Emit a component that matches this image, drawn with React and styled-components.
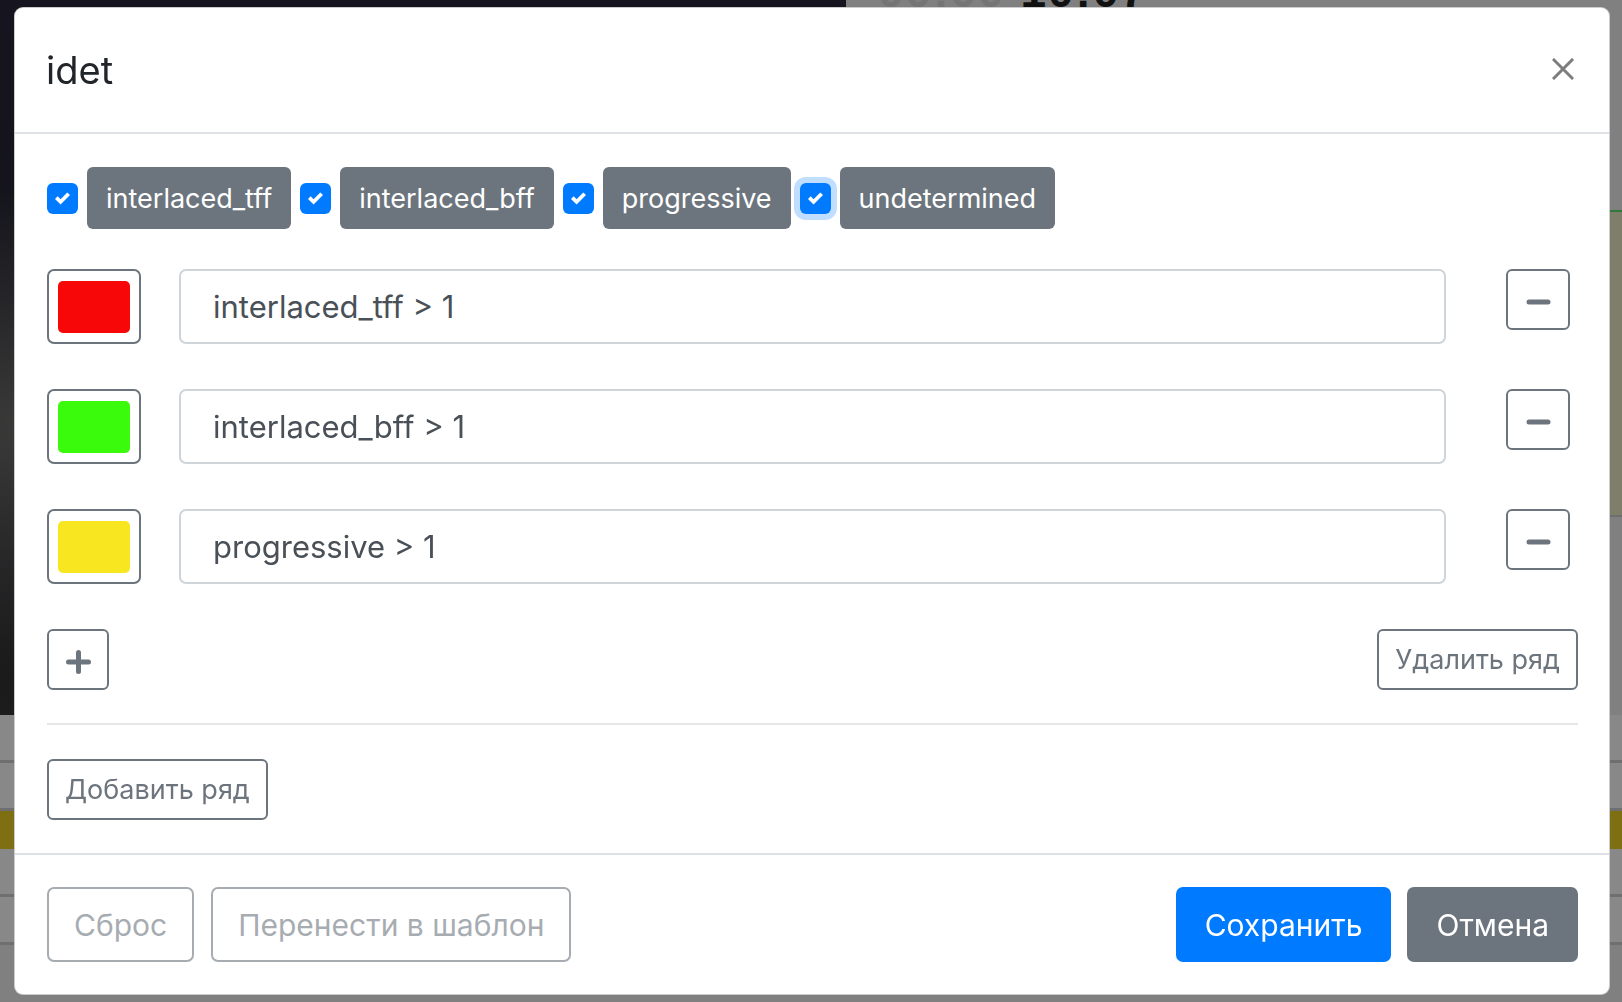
import React from 'react'
import styled, { createGlobalStyle } from 'styled-components'

const FILTERS = ['interlaced_tff', 'interlaced_bff', 'progressive', 'undetermined']

const RULES = [
  { color: '#f70707', expr: 'interlaced_tff > 1' },
  { color: '#3afb0b', expr: 'interlaced_bff > 1' },
  { color: '#f8e621', expr: 'progressive > 1' },
]

const CheckIcon = () => (
  <svg width="15" height="15" viewBox="0 0 8 8">
    <path fill="#fff" d="M6.564.75l-3.59 3.612-1.538-1.55L0 4.26l2.974 2.99L8 2.193z" />
  </svg>
)

const MinusIcon = () => (
  <svg width="25" height="6" viewBox="0 0 25 6">
    <rect x="0.5" y="0.5" width="24" height="5" rx="2.5" fill="#6c757d" />
  </svg>
)

const PlusIcon = () => (
  <svg width="25" height="24" viewBox="0 0 25 24">
    <rect x="0" y="9.5" width="25" height="5" rx="2.5" fill="#6c757d" />
    <rect x="10" y="0" width="5" height="24" rx="2.5" fill="#6c757d" />
  </svg>
)

const CloseIcon = () => (
  <svg width="22" height="22" viewBox="0 0 22 22">
    <path d="M2 2L20 20M20 2L2 20" stroke="#7d7d7d" strokeWidth="3" strokeLinecap="square" />
  </svg>
)

const App = () => {
  return (
    <>
      <GlobalStyle />

      <Page>
        <Stage>
          <Video />
          <Side>
            <Clock>
              <Faded>00:00</Faded> 10:07
            </Clock>
            <SideGap />
            <SideHeading>s</SideHeading>
            <SideRule />
            <SidePanel />
          </Side>
        </Stage>
        <Track />
        <Track />
        <Timeline />
        <Track />
        <Track />
      </Page>

      <Overlay>
        <Dialog>
          <Header>
            <Title>idet</Title>
            <Close type="button" aria-label="Close"><CloseIcon /></Close>
          </Header>

          <Body>
            <Filters>
              {FILTERS.map((name, i) => (
                <Filter key={name}>
                  <Check $focused={i === FILTERS.length - 1}><CheckIcon /></Check>
                  <Badge>{name}</Badge>
                </Filter>
              ))}
            </Filters>

            <Rules>
              {RULES.map(rule => (
                <Rule key={rule.expr}>
                  <SwatchButton type="button">
                    <Swatch $color={rule.color} />
                  </SwatchButton>
                  <Expr value={rule.expr} readOnly />
                  <IconButton type="button" $w={64}><MinusIcon /></IconButton>
                </Rule>
              ))}
            </Rules>

            <Actions>
              <IconButton type="button" $w={62}><PlusIcon /></IconButton>
              <SmallButton type="button">Удалить ряд</SmallButton>
            </Actions>

            <Divider />

            <SmallButton type="button" $start>Добавить ряд</SmallButton>
          </Body>

          <Footer>
            <ButtonGroup $gap={17}>
              <Button $variant="outline" disabled>Сброс</Button>
              <Button $variant="outline" disabled>Перенести в шаблон</Button>
            </ButtonGroup>
            <ButtonGroup $gap={16}>
              <Button $variant="primary" $pad={27}>Сохранить</Button>
              <Button $variant="secondary" $pad={27}>Отмена</Button>
            </ButtonGroup>
          </Footer>
        </Dialog>
      </Overlay>
    </>
  )
}

export default App

const GlobalStyle = createGlobalStyle`
  html, body {
    margin: 0;
    padding: 0;
  }
  body {
    width: 1622px;
    height: 1002px;
    overflow: hidden;
    background: #808080;
    font-family: Inter, "Noto Sans", "Liberation Sans", sans-serif;
  }
  * {
    box-sizing: border-box;
  }
`

/* page behind the backdrop, already dimmed */

const Page = styled.div`
  height: 100vh;
  display: flex;
  flex-direction: column;
  background: #808080;
`

const Stage = styled.div`
  display: flex;
  height: 715px;
`

const Video = styled.div`
  width: 846px;
  background:
    radial-gradient(ellipse at 5% 60%, #3b3b3a 0%, transparent 40%),
    linear-gradient(180deg, #16151f 0%, #121218 60%, #1c1c1c 100%);
`

const Side = styled.div`
  flex: 1;
  display: flex;
  flex-direction: column;
  overflow: hidden;
`

const Clock = styled.div`
  margin-top: -36px;
  padding-left: 32px;
  height: 44px;
  font: 700 46px "Liberation Sans", sans-serif;
  color: #111;
  letter-spacing: 2px;
`

const Faded = styled.span`
  color: #757575;
`

const SideGap = styled.div`
  height: 150px;
`

const SideHeading = styled.div`
  height: 52px;
  padding-left: 742px;
  font: 700 28px "Liberation Sans", sans-serif;
  color: #0e4d1c;
`

const SideRule = styled.div`
  height: 2px;
  background: #2f7a3a;
`

const SidePanel = styled.div`
  height: 305px;
  background: #7f7e6a;
  border-bottom: 2px solid #6e6e6e;
`

const Track = styled.div`
  height: 48px;
  border-bottom: 3px solid #6f6f6f;
  background: #888;
`

const Timeline = styled.div`
  height: 38px;
  background: #7e7012;
`

/* modal */

const Overlay = styled.div`
  position: fixed;
  inset: 0;
  padding: 7px 12px 0 14px;
`

const Dialog = styled.div`
  width: 1596px;
  display: flex;
  flex-direction: column;
  background: #fff;
  border: 1px solid rgba(0, 0, 0, 0.2);
  border-radius: 9px;
  color: #212529;
`

const Header = styled.header`
  height: 126px;
  display: flex;
  align-items: center;
  justify-content: space-between;
  padding: 0 35px 0 31px;
  border-bottom: 2px solid #dee2e6;
`

const Title = styled.h5`
  margin: 0;
  font-size: 38px;
  font-weight: 400;
  line-height: 1;
  color: #212529;
`

const Close = styled.button`
  display: flex;
  padding: 0;
  border: 0;
  background: none;
  margin-top: -2px;
`

const Body = styled.div`
  display: flex;
  flex-direction: column;
  padding: 33px 31px 33px 32px;
`

const Filters = styled.div`
  display: flex;
  align-items: center;
  gap: 9px;
`

const Filter = styled.label`
  display: flex;
  align-items: center;
  gap: 9px;
`

const Check = styled.span`
  width: 31px;
  height: 31px;
  display: flex;
  align-items: center;
  justify-content: center;
  border-radius: 6px;
  background: #007bff;
  box-shadow: ${p => (p.$focused ? '0 0 0 6px #c0deff' : 'none')};
`

const Badge = styled.span`
  height: 62px;
  display: flex;
  align-items: center;
  padding: 0 19px;
  border-radius: 6px;
  background: #6c757d;
  color: #fff;
  font-size: 27px;
`

const Rules = styled.div`
  display: flex;
  flex-direction: column;
  gap: 45px;
  margin-top: 40px;
`

const Rule = styled.div`
  display: flex;
  align-items: flex-start;
  padding-right: 8px;
`

const SwatchButton = styled.button`
  width: 94px;
  height: 75px;
  padding: 0;
  display: flex;
  align-items: center;
  justify-content: center;
  border: 2px solid #6c757d;
  border-radius: 7px;
  background: #fff;
`

const Swatch = styled.span`
  width: 72px;
  height: 52px;
  border-radius: 5px;
  background: ${p => p.$color};
`

const Expr = styled.input`
  flex: 1;
  min-width: 0;
  height: 75px;
  margin: 0 60px 0 38px;
  padding: 0 32px;
  border: 2px solid #ced4da;
  border-radius: 7px;
  font-family: inherit;
  font-size: 31px;
  color: #495057;
  outline: none;
`

const IconButton = styled.button`
  width: ${p => p.$w}px;
  height: 61px;
  padding: 4px 0 0;
  display: flex;
  align-items: center;
  justify-content: center;
  border: 2px solid #6c757d;
  border-radius: 6px;
  background: #fff;
`

const Actions = styled.div`
  display: flex;
  align-items: center;
  justify-content: space-between;
  margin-top: 45px;
`

const SmallButton = styled.button`
  align-self: ${p => (p.$start ? 'flex-start' : 'auto')};
  height: 61px;
  padding: 0 16px;
  border: 2px solid #6c757d;
  border-radius: 6px;
  background: #fff;
  color: #6c757d;
  font-family: inherit;
  font-size: 27px;
`

const Divider = styled.hr`
  width: 100%;
  margin: 33px 0 34px;
  border: 0;
  border-top: 2px solid #e6e6e6;
`

const Footer = styled.footer`
  display: flex;
  align-items: center;
  justify-content: space-between;
  padding: 32px 31px 32px 32px;
  border-top: 2px solid #dee2e6;
`

const ButtonGroup = styled.div`
  display: flex;
  gap: ${p => p.$gap}px;
`

const variants = {
  primary: 'background: #007bff; border-color: #007bff; color: #fff;',
  secondary: 'background: #6c757d; border-color: #6c757d; color: #fff;',
  outline: 'background: #fff; border-color: #6c757d; color: #6c757d; opacity: 0.6;',
}

const Button = styled.button`
  height: 75px;
  padding: 0 ${p => p.$pad || 25}px;
  border: 2px solid;
  border-radius: 7px;
  font-family: inherit;
  font-size: 30px;
  ${p => variants[p.$variant]}
`
